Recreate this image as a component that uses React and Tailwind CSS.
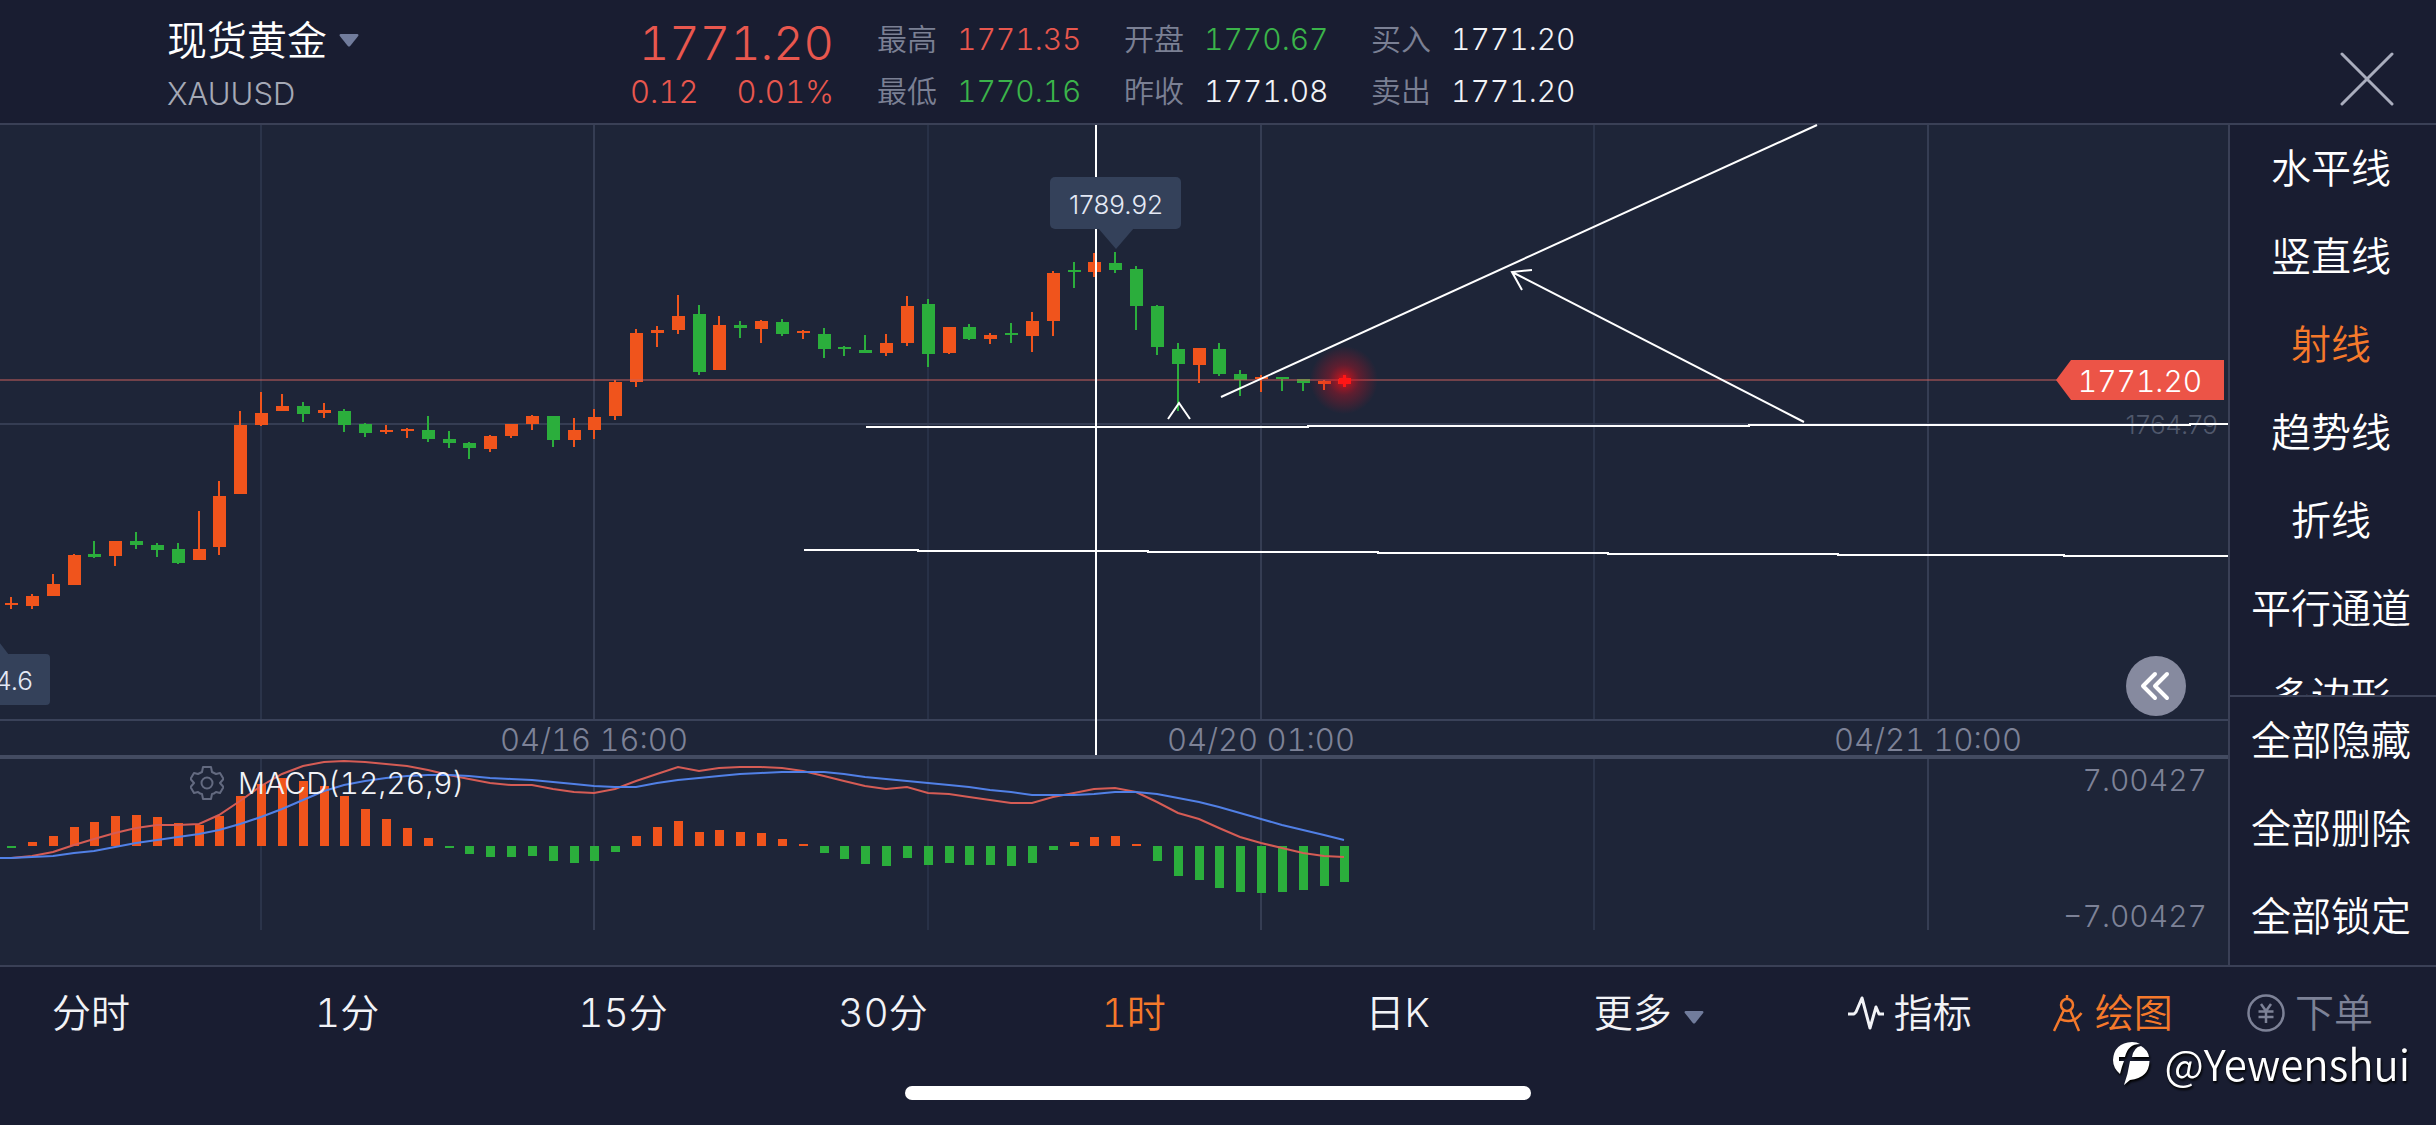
import React from "react";

const UP = "#f0541c";
const DOWN = "#2bae3c";
const STEP = 125 / 6;
const candleX = (i) => Math.round(11 + i * STEP);

// [direction, high, body top, body bottom, low]
const CANDLES = [
  ["u", 597, 603, 605, 609], ["u", 594, 596, 606, 609], ["u", 574, 584, 596, 596], ["u", 554, 555, 585, 585],
  ["d", 541, 554, 557, 558], ["u", 541, 541, 556, 566], ["d", 532, 541, 545, 549], ["d", 543, 545, 550, 557],
  ["d", 543, 549, 563, 564], ["u", 511, 549, 560, 560], ["u", 481, 496, 547, 555], ["u", 411, 425, 494, 494],
  ["u", 392, 413, 425, 426], ["u", 394, 406, 411, 411], ["d", 402, 406, 414, 422], ["u", 403, 410, 413, 418],
  ["d", 409, 411, 425, 432], ["d", 423, 424, 433, 437], ["u", 425, 430, 432, 434], ["u", 428, 429, 431, 438],
  ["d", 416, 430, 439, 442], ["d", 431, 439, 443, 448], ["d", 442, 443, 448, 459], ["u", 435, 436, 449, 452],
  ["u", 424, 424, 436, 438], ["u", 415, 416, 424, 430], ["d", 416, 416, 440, 447], ["u", 418, 430, 440, 447],
  ["u", 409, 417, 430, 439], ["u", 380, 382, 416, 420], ["u", 329, 333, 382, 387], ["u", 326, 330, 333, 347],
  ["u", 295, 316, 330, 334], ["d", 305, 314, 372, 375], ["u", 316, 325, 370, 370], ["d", 321, 325, 328, 338],
  ["u", 320, 321, 329, 343], ["d", 319, 322, 334, 336], ["u", 330, 331, 333, 339], ["d", 328, 334, 349, 358],
  ["d", 346, 347, 349, 356], ["d", 335, 350, 353, 353], ["u", 334, 343, 353, 356], ["u", 296, 306, 343, 346],
  ["d", 299, 304, 354, 367], ["u", 327, 327, 353, 354], ["d", 324, 327, 339, 340], ["u", 333, 335, 339, 344],
  ["d", 323, 333, 335, 343], ["u", 312, 321, 336, 352], ["u", 271, 273, 321, 336], ["d", 262, 270, 272, 288],
  ["u", 253, 262, 272, 277], ["d", 252, 263, 270, 273], ["d", 266, 269, 306, 330], ["d", 305, 306, 347, 355],
  ["d", 343, 349, 364, 411], ["u", 348, 348, 365, 383], ["d", 343, 349, 374, 376], ["d", 370, 374, 380, 396],
  ["u", 375, 377, 379, 392], ["d", 377, 377, 379, 391], ["d", 379, 379, 383, 391], ["u", 380, 381, 384, 390],
  ["u", 375, 379, 384, 387],
];

const MACD_BARS = [
  -2, 4, 10, 19, 24, 30, 31, 29, 23, 21, 30, 50, 62, 68, 65, 60, 50, 37, 27, 18, 8, -2, -8, -11, -11, -10, -15, -17,
  -15, -6, 10, 19, 25, 14, 16, 14, 13, 7, 2, -7, -13, -18, -20, -12, -19, -17, -19, -19, -20, -17, -4, 4, 9, 10, 2,
  -15, -30, -34, -42, -46, -47, -46, -44, -40, -36,
];

const DIF = [
  99, 97, 93, 86, 80, 74, 69, 66, 66, 65, 56, 42, 27, 15, 7, 3, 2, 3, 5, 7, 11, 16, 20, 24, 26, 26, 30, 33, 34, 30,
  22, 15, 8, 12, 9, 8, 8, 9, 12, 17, 22, 27, 30, 28, 34, 35, 38, 41, 44, 44, 38, 34, 30, 29, 33, 43, 54, 60, 69, 78,
  84, 89, 94, 97, 98,
];

const DEA = [
  99, 98, 97, 94, 92, 88, 84, 81, 78, 75, 71, 65, 58, 50, 41, 32, 26, 22, 19, 17, 16, 16, 17, 19, 20, 21, 23, 25, 27,
  28, 28, 24, 21, 19, 17, 15, 14, 13, 13, 13, 15, 18, 20, 22, 24, 26, 28, 31, 33, 36, 36, 36, 35, 33, 33, 35, 39, 43,
  48, 54, 60, 66, 71, 76, 81,
];

const GRID = [
  [261, "#2b344a"],
  [594, "#353d53"],
  [928, "#283147"],
  [1261, "#353d53"],
  [1594, "#2b344a"],
  [1928, "#353d53"],
];

const linePoints = (values) => `0,${values[0]} ` + values.map((y, i) => `${candleX(i)},${y}`).join(" ");

function Caret() {
  return (
    <svg width="20" height="13" viewBox="0 0 20 13" aria-hidden="true">
      <path d="M1.500 0h17q1.500 0.500 0.700 1.900l-8 10q-1.200 1.300-2.400 0l-8-10Q0 0.500 1.500 0Z" fill="#717c9c" />
    </svg>
  );
}

function Stat({ label, value, tone }) {
  return (
    <div className="flex items-center gap-5">
      <dt className="text-[#7b8094]">{label}</dt>
      <dd className={tone}>{value}</dd>
    </div>
  );
}

function Header() {
  return (
    <header className="flex h-[125px] items-center border-b-2 border-[#3a4056] pt-1.5 pr-[42px] pl-[167px]">
      <div className="flex w-[463px] flex-col pt-1">
        <button type="button" className="flex h-[54px] items-center gap-3 text-[40px]">
          现货黄金
          <Caret />
        </button>
        <span className="text-[31px] leading-[52px] text-[#a5a9b6]">XAUUSD</span>
      </div>
      <div className="flex w-[204px] flex-col items-end pb-1 text-[#e8574e]">
        <strong className="text-[47px] leading-[58px] font-[350]">1771.20</strong>
        <div className="flex w-full justify-between text-[31px] leading-10">
          <span>0.12</span>
          <span>0.01%</span>
        </div>
      </div>
      <dl className="ml-[43px] grid grid-cols-[repeat(3,247px)] gap-y-1 text-[30px] leading-12">
        <Stat label="最高" value="1771.35" tone="text-[#e8574e]" />
        <Stat label="开盘" value="1770.67" tone="text-[#3bb44a]" />
        <Stat label="买入" value="1771.20" tone="text-[#f2f3f7]" />
        <Stat label="最低" value="1770.16" tone="text-[#3bb44a]" />
        <Stat label="昨收" value="1771.08" tone="text-[#f2f3f7]" />
        <Stat label="卖出" value="1771.20" tone="text-[#f2f3f7]" />
      </dl>
      <button type="button" aria-label="关闭" className="mt-7 ml-auto">
        <svg width="54" height="54" viewBox="0 0 54 54" fill="none" stroke="#a9adbd" strokeWidth="3" strokeLinecap="round">
          <path d="M2 2L52 52M52 2L2 52" />
        </svg>
      </button>
    </header>
  );
}

function PriceChart() {
  return (
    <svg viewBox="0 125 2228 630" className="block h-auto w-full overflow-visible" role="img" aria-label="XAUUSD 1时 K线">
      <defs>
        <radialGradient id="glow">
          <stop offset="0" stopColor="#ff1010" stopOpacity="0.900" />
          <stop offset="0.200" stopColor="#f01018" stopOpacity="0.600" />
          <stop offset="0.450" stopColor="#d81020" stopOpacity="0.350" />
          <stop offset="1" stopColor="#d81020" stopOpacity="0" />
        </radialGradient>
      </defs>
      <g shapeRendering="crispEdges">
        {GRID.map(([x, color]) => (
          <rect key={x} x={x - 1} y="125" width="2" height="595" fill={color} />
        ))}
        <rect x="0" y="423" width="2228" height="2" fill="#353d53" />
        <rect x="0" y="719" width="2228" height="2" fill="#3a4259" />
      </g>
      <text x="2218" y="434" textAnchor="end" className="text-[26px] proportional-nums" fill="#50586c">1764.79</text>
      <g shapeRendering="crispEdges">
        {CANDLES.map(([dir, high, top, bottom, low], i) => (
          <g key={i} fill={dir === "u" ? UP : DOWN}>
            <rect x={candleX(i) - 1} y={high} width="2" height={low - high} />
            <rect x={candleX(i) - 6} y={top} width="13" height={Math.max(2, bottom - top)} />
          </g>
        ))}
        <rect x="0" y="379" width="2060" height="2" fill="#c8605c" fillOpacity="0.500" />
        <path d="M866 427H1308V426H1749V425H2190V424H2228" fill="none" stroke="#fff" strokeWidth="2" />
        <path d="M804 550H918V551H1148V552H1378V553H1608V554H1838V555H2064V556H2228" fill="none" stroke="#fff" strokeWidth="2" />
        <rect x="1095" y="125" width="2" height="630" fill="#fff" />
      </g>
      <g fill="none" stroke="#fff" strokeWidth="2">
        <path d="M1221 397L1817 125" />
        <path d="M1804 422L1512 272M1532 270L1512 272L1522 290" />
        <path d="M1168 419L1179 403L1190 419" />
      </g>
      <circle cx="1344" cy="380" r="34" fill="url(#glow)" />
      <path d="M1339 378H1343V375H1346V378H1351V384H1346V387H1343V384H1339Z" fill="#ff1616" />
      <g fill="#34415a">
        <rect x="1050" y="177" width="131" height="52" rx="5" />
        <path d="M1098 228H1134L1116 249Z" />
        <rect x="-60" y="654" width="110" height="51" rx="4" />
        <path d="M-22 655L-7 634L9 655Z" />
      </g>
      <g className="text-[26px] proportional-nums" fill="#e4e9f5">
        <text x="1116" y="214" textAnchor="middle">1789.92</text>
        <text x="33" y="690" textAnchor="end">1764.6</text>
      </g>
      <path d="M2056 380L2071 360H2224V400H2071Z" fill="#ec5447" />
      <text x="2140" y="392" textAnchor="middle" className="text-[30px]" fill="#fff">1771.20</text>
      <g className="text-[31px]" fill="#7d8297" textAnchor="middle">
        <text x="594" y="751">04/16 16:00</text>
        <text x="1261" y="751">04/20 01:00</text>
        <text x="1928" y="751">04/21 10:00</text>
      </g>
    </svg>
  );
}

function GearIcon() {
  return (
    <svg width="34" height="34" viewBox="0 0 34 34" fill="none" stroke="#636a80" strokeWidth="2" strokeLinejoin="round" aria-hidden="true">
      <path d="M13 1H21L22 6Q24 7 26 8L30 7L33.500 13L30 17L33.500 21L30 27L26 26Q24 28 22 28L21 33H13L12 28Q10 28 8 26L4 27L0.500 21L4 17L0.500 13L4 7L8 8Q10 7 12 6Z" />
      <circle cx="17" cy="17" r="5.500" />
    </svg>
  );
}

function MacdChart() {
  return (
    <div className="relative">
      <svg viewBox="0 0 2228 206" className="block h-auto w-full overflow-visible" role="img" aria-label="MACD">
        <g shapeRendering="crispEdges">
          {GRID.map(([x, color]) => (
            <rect key={x} x={x - 1} y="0" width="2" height="171" fill={color} />
          ))}
          {MACD_BARS.map((v, i) => (
            <rect key={i} x={candleX(i) - 4} y={v > 0 ? 87 - v : 87} width="9" height={Math.abs(v)} fill={v > 0 ? UP : DOWN} />
          ))}
        </g>
        <polyline points={linePoints(DIF)} fill="none" stroke="#d55c55" strokeWidth="2" />
        <polyline points={linePoints(DEA)} fill="none" stroke="#5180e6" strokeWidth="2" />
        <g className="text-[30px]" fill="#7d8297" textAnchor="end">
          <text x="2207" y="32">7.00427</text>
          <text x="2207" y="168">−7.00427</text>
        </g>
      </svg>
      <button type="button" className="absolute top-0 left-[190px] flex h-12 items-center gap-3.5 text-[30px] text-[#f2f3f7]">
        <GearIcon />
        MACD(12,26,9)
      </button>
    </div>
  );
}

const TOOLS = ["水平线", "竖直线", "射线", "趋势线", "折线", "平行通道", "多边形"];
const ACTIONS = ["全部隐藏", "全部删除", "全部锁定"];

function Sidebar() {
  return (
    <aside className="flex w-[208px] shrink-0 flex-col border-l-2 border-[#3a4056] text-[40px]">
      <div className="min-h-0 flex-1 basis-0 overflow-hidden pr-1">
        {TOOLS.map((tool) => (
          <button
            key={tool}
            type="button"
            aria-pressed={tool === "射线"}
            className="block h-[88px] w-full text-white aria-pressed:text-[#f5792b]"
          >
            {tool}
          </button>
        ))}
      </div>
      <div className="border-t-2 border-[#3a4056] pr-1 pb-1">
        {ACTIONS.map((action) => (
          <button key={action} type="button" className="block h-[88px] w-full text-white">
            {action}
          </button>
        ))}
      </div>
    </aside>
  );
}

function PulseIcon() {
  return (
    <svg width="36" height="36" viewBox="0 0 36 36" fill="none" stroke="currentColor" strokeWidth="3" strokeLinejoin="round" aria-hidden="true">
      <path d="M0 19H6L8 17L14 3L22 33L28 12L31 19H36" />
    </svg>
  );
}

function CompassIcon() {
  return (
    <svg width="30" height="38" viewBox="0 0 30 38" fill="none" stroke="currentColor" strokeWidth="2.500" aria-hidden="true">
      <path d="M14 1V5M11 16L1 37M17 16L26 37M7 25Q20 31 28.500 19" />
      <circle cx="14" cy="11" r="6" />
    </svg>
  );
}

function YenIcon() {
  return (
    <svg width="38" height="38" viewBox="0 0 38 38" fill="none" stroke="currentColor" strokeWidth="2.500" aria-hidden="true">
      <circle cx="19" cy="19" r="17.500" />
      <path d="M14 10L19 17L24 10M11.500 17.500H26.500M11.500 23H26.500M19 17V29" />
    </svg>
  );
}

const PERIODS = ["分时", "1分", "15分", "30分", "1时", "日K"];

function TabBar() {
  return (
    <nav className="grid h-[94px] grid-cols-[263fr_263fr_260fr_263fr_264fr_228fr_254fr_205fr_194fr_189fr] items-center border-t-2 border-[#3a4056] pl-[52px] text-[39px] text-[#f2f3f7]">
      {PERIODS.map((period) => (
        <button key={period} type="button" aria-pressed={period === "1时"} className="justify-self-start aria-pressed:text-[#f5792b]">
          {period}
        </button>
      ))}
      <button type="button" className="flex items-center gap-3 justify-self-start">
        更多
        <span className="pt-2">
          <Caret />
        </span>
      </button>
      <button type="button" className="flex items-center gap-2.5 justify-self-start">
        <PulseIcon />
        指标
      </button>
      <button type="button" className="flex items-center gap-3 justify-self-start text-[#f5792b]">
        <CompassIcon />
        绘图
      </button>
      <button type="button" className="flex items-center gap-2.5 justify-self-start text-[#7d8297]">
        <YenIcon />
        下单
      </button>
    </nav>
  );
}

function Watermark() {
  return (
    <div className="absolute right-[26px] bottom-8 flex items-center gap-3 text-[42px] leading-[60px] text-white drop-shadow-[1px_2px_1px_#000]">
      <svg width="40" height="44" viewBox="0 0 40 44" aria-hidden="true">
        <path fill="#fff" d="M8 33Q1 27 1 19Q2 2 20 1Q25 1 28 3Q16 3 13 16H7V20H12Q10 25 8 33Z" />
        <path fill="#fff" d="M20 16Q22 6 29 5Q36 9 37 16Z" />
        <path fill="#fff" d="M18 20H37.500Q37 37 18 39L12 44Q16 33 18 20Z" />
      </svg>
      <span className="font-['Noto_Sans_CJK_SC',sans-serif]">@Yewenshui</span>
    </div>
  );
}

export default function App() {
  return (
    <div className="relative flex min-h-screen flex-col bg-[#191d31] font-['Inter','Noto_Sans_CJK_SC',sans-serif] font-[350] text-white tabular-nums">
      <Header />
      <main className="flex">
        <div className="relative min-w-0 flex-1 bg-[#1e2538]">
          <PriceChart />
          <div className="h-1 bg-[#434b61]" />
          <MacdChart />
          <button
            type="button"
            aria-label="收起"
            className="absolute right-[42px] bottom-[249px] flex size-[60px] items-center justify-center rounded-full bg-[#868a9f]"
          >
            <svg width="32" height="32" viewBox="0 0 32 32" fill="none" stroke="#fff" strokeWidth="4" strokeLinecap="round" strokeLinejoin="round">
              <path d="M15 4L3 16L15 28M27 4L15 16L27 28" />
            </svg>
          </button>
        </div>
        <Sidebar />
      </main>
      <TabBar />
      <div className="mx-auto mt-[27px] mb-6 h-[14px] w-[626px] rounded-full bg-white" />
      <Watermark />
    </div>
  );
}
